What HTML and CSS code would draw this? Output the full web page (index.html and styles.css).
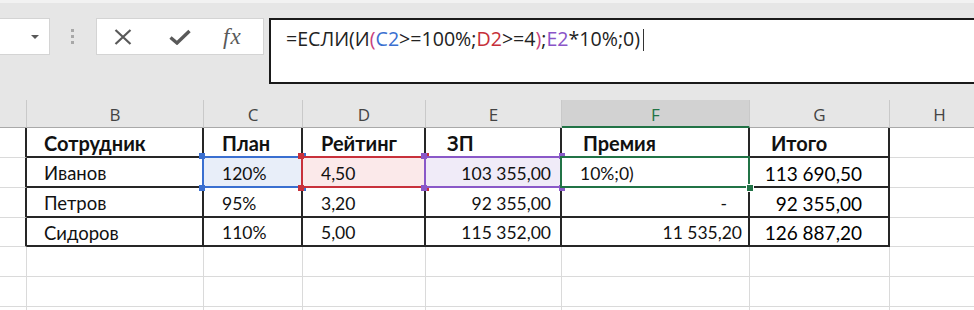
FILE: index.html
```html
<!DOCTYPE html>
<html lang="ru">
<head>
  <meta charset="UTF-8">
  <title>Премия</title>
  <link rel="stylesheet" href="styles.css">
</head>
<body>

<div class="formula-row">
  <div class="name-box"><span class="drop"></span></div>
  <div class="grip"><i></i><i></i><i></i></div>
  <div class="fx-buttons">
    <svg class="btn-x" width="18" height="16" viewBox="0 0 18 16"><path d="M1.5 1L16.5 15M16.5 1L1.5 15" stroke="#595959" stroke-width="2.2" fill="none"/></svg>
    <svg class="btn-ok" width="22" height="16" viewBox="0 0 22 16"><path d="M1.5 8.5L8 14L20.5 2" stroke="#595959" stroke-width="3.4" fill="none"/></svg>
    <span class="fx">fx</span>
  </div>
  <div class="formula">=ЕСЛИ(И<span class="par">(</span><span class="r-blue">C2</span>&gt;=100%;<span class="r-red">D2</span>&gt;=4<span class="par">)</span>;<span class="r-purple">E2</span>*10%;0)<span class="cursor"></span></div>
</div>

<div class="sheet">
  <div class="hd"></div>
  <div class="hd">B</div>
  <div class="hd">C</div>
  <div class="hd">D</div>
  <div class="hd">E</div>
  <div class="hd sel">F</div>
  <div class="hd">G</div>
  <div class="hd">H</div>

  <div class="c rn edge"></div>
  <div class="c t first bold">Сотрудник</div>
  <div class="c t bold">План</div>
  <div class="c t bold">Рейтинг</div>
  <div class="c t bold wide">ЗП</div>
  <div class="c t bold wide">Премия</div>
  <div class="c t bold wide">Итого</div>
  <div class="c"></div>

  <div class="c rn edge"></div>
  <div class="c t first">Иванов</div>
  <div class="c t ref blue">120%</div>
  <div class="c t ref red">4,50</div>
  <div class="c t num ref purple">103 355,00</div>
  <div class="c t active">10%;0)</div>
  <div class="c t num total">113 690,50</div>
  <div class="c"></div>

  <div class="c rn edge"></div>
  <div class="c t first">Петров</div>
  <div class="c t">95%</div>
  <div class="c t">3,20</div>
  <div class="c t num">92 355,00</div>
  <div class="c t num dash">-</div>
  <div class="c t num total">92 355,00</div>
  <div class="c"></div>

  <div class="c rn edge"></div>
  <div class="c t first">Сидоров</div>
  <div class="c t">110%</div>
  <div class="c t">5,00</div>
  <div class="c t num">115 352,00</div>
  <div class="c t num bonus">11 535,20</div>
  <div class="c t num total">126 887,20</div>
  <div class="c"></div>

  <div class="c rn"></div><div class="c"></div><div class="c"></div><div class="c"></div><div class="c"></div><div class="c"></div><div class="c"></div><div class="c"></div>
  <div class="c rn"></div><div class="c"></div><div class="c"></div><div class="c"></div><div class="c"></div><div class="c"></div><div class="c"></div><div class="c"></div>
  <div class="c rn"></div><div class="c"></div><div class="c"></div><div class="c"></div><div class="c"></div><div class="c"></div><div class="c"></div><div class="c"></div>
</div>

</body>
</html>
```

FILE: styles.css
```css
html, body { height: 310px; }
body { margin: 0; background: #fff; overflow: hidden; font-family: "Lato", "Noto Sans", sans-serif; }

/* formula bar */
.formula-row {
  height: 100px;
  box-sizing: border-box;
  background: #e6e6e6;
  border-top: 3px solid #f2f2f2;
  padding-top: 15px;
  display: flex;
  align-items: flex-start;
}
.name-box {
  width: 51px;
  height: 37px;
  margin-left: -1px;
  box-sizing: border-box;
  background: #fff;
  border: 1px solid #d4d4d4;
  display: flex;
  justify-content: flex-end;
  align-items: center;
  padding-right: 10px;
}
.drop {
  border-left: 4px solid transparent;
  border-right: 4px solid transparent;
  border-top: 4px solid #595959;
}
.grip {
  display: flex;
  flex-direction: column;
  gap: 3px;
  margin: 11px 0 0 21px;
}
.grip i { width: 3px; height: 3px; background: #a8a8a8; }
.fx-buttons {
  margin-left: 22px;
  width: 168px;
  height: 37px;
  box-sizing: border-box;
  background: #fff;
  border: 1px solid #d4d4d4;
  display: flex;
  align-items: center;
  padding-left: 17px;
}
.btn-ok { margin-left: 37px; }
.fx {
  margin-left: 32px;
  font-family: "Liberation Serif", serif;
  font-style: italic;
  font-size: 23px;
  color: #595959;
  letter-spacing: 1px;
}
.formula {
  flex: 1;
  margin-left: 5px;
  margin-right: -2px;
  height: 66px;
  box-sizing: border-box;
  background: #fff;
  border: 2px solid #1a1a1a;
  padding: 6px 0 0 15px;
  font-family: "Open Sans", sans-serif;
  font-size: 19.6px;
  line-height: 26px;
  color: #222;
  white-space: nowrap;
}
.par { color: #c8407c; }
.r-blue { color: #3a6fd0; }
.r-red { color: #c62f39; }
.r-purple { color: #8a55c8; }
.cursor {
  display: inline-block;
  width: 1px;
  height: 22px;
  margin-left: 3px;
  vertical-align: -5px;
  background: #333;
}

/* grid */
.sheet {
  width: 990px;
  display: grid;
  grid-template-columns: 27px 177px 99px 123px 136px 188px 140px 100px;
  grid-template-rows: 28px 30px 30px 30px 29px 30px 30px 30px;
}
.hd {
  background: #e6e6e6;
  border-right: 1px solid #c9c9c9;
  border-bottom: 1px solid #a9a9a9;
  display: flex;
  justify-content: center;
  align-items: center;
  padding-top: 2px;
  font-family: "Open Sans", sans-serif;
  font-size: 17px;
  color: #444;
}
.hd.sel {
  background: #d2d2d2;
  color: #217346;
  border-bottom: 2px solid #217346;
}
.c {
  background: #fff;
  border-right: 1px solid #dadada;
  border-bottom: 1px solid #dadada;
  display: flex;
  align-items: center;
  padding: 2px 0 0 18px;
  font-size: 17.5px;
  color: #111;
  white-space: nowrap;
}
.rn { padding: 0; }
.rn.edge { border-right: 2px solid #262626; }
.t {
  border-right: 2px solid #262626;
  border-bottom: 2px solid #262626;
}
.first { padding-left: 17px; font-size: 18.5px; }
.bold { font-weight: bold; font-size: 20px; }
.wide { padding-left: 21px; }
.num { justify-content: flex-end; padding-right: 9px; }
.bonus { padding-right: 6px; }
.dash { padding-right: 21px; }
.total { font-size: 19px; color: #000; padding-right: 26px; }

/* formula references */
.ref { position: relative; background: var(--bg); }
.ref::before {
  content: "";
  position: absolute;
  inset: -2px;
  border: 2px solid var(--c);
}
.ref::after {
  content: "";
  position: absolute;
  inset: -5px;
  background:
    linear-gradient(var(--c), var(--c)) left top / 6px 6px no-repeat,
    linear-gradient(var(--c), var(--c)) right top / 6px 6px no-repeat,
    linear-gradient(var(--c), var(--c)) left bottom / 6px 6px no-repeat,
    linear-gradient(var(--c), var(--c)) right bottom / 6px 6px no-repeat;
}
.blue { --c: #3a6fd0; --bg: #e8eef9; }
.red { --c: #c8313b; --bg: #fbe9ea; }
.purple { --c: #8a58c8; --bg: #f0ebf8; }

/* active cell */
.active { position: relative; }
.active::before {
  content: "";
  position: absolute;
  inset: -2px;
  border: 2px solid #217346;
}
.active::after {
  content: "";
  position: absolute;
  right: -6px;
  bottom: -6px;
  width: 6px;
  height: 6px;
  background: #217346;
  border: 1px solid #fff;
}
```
